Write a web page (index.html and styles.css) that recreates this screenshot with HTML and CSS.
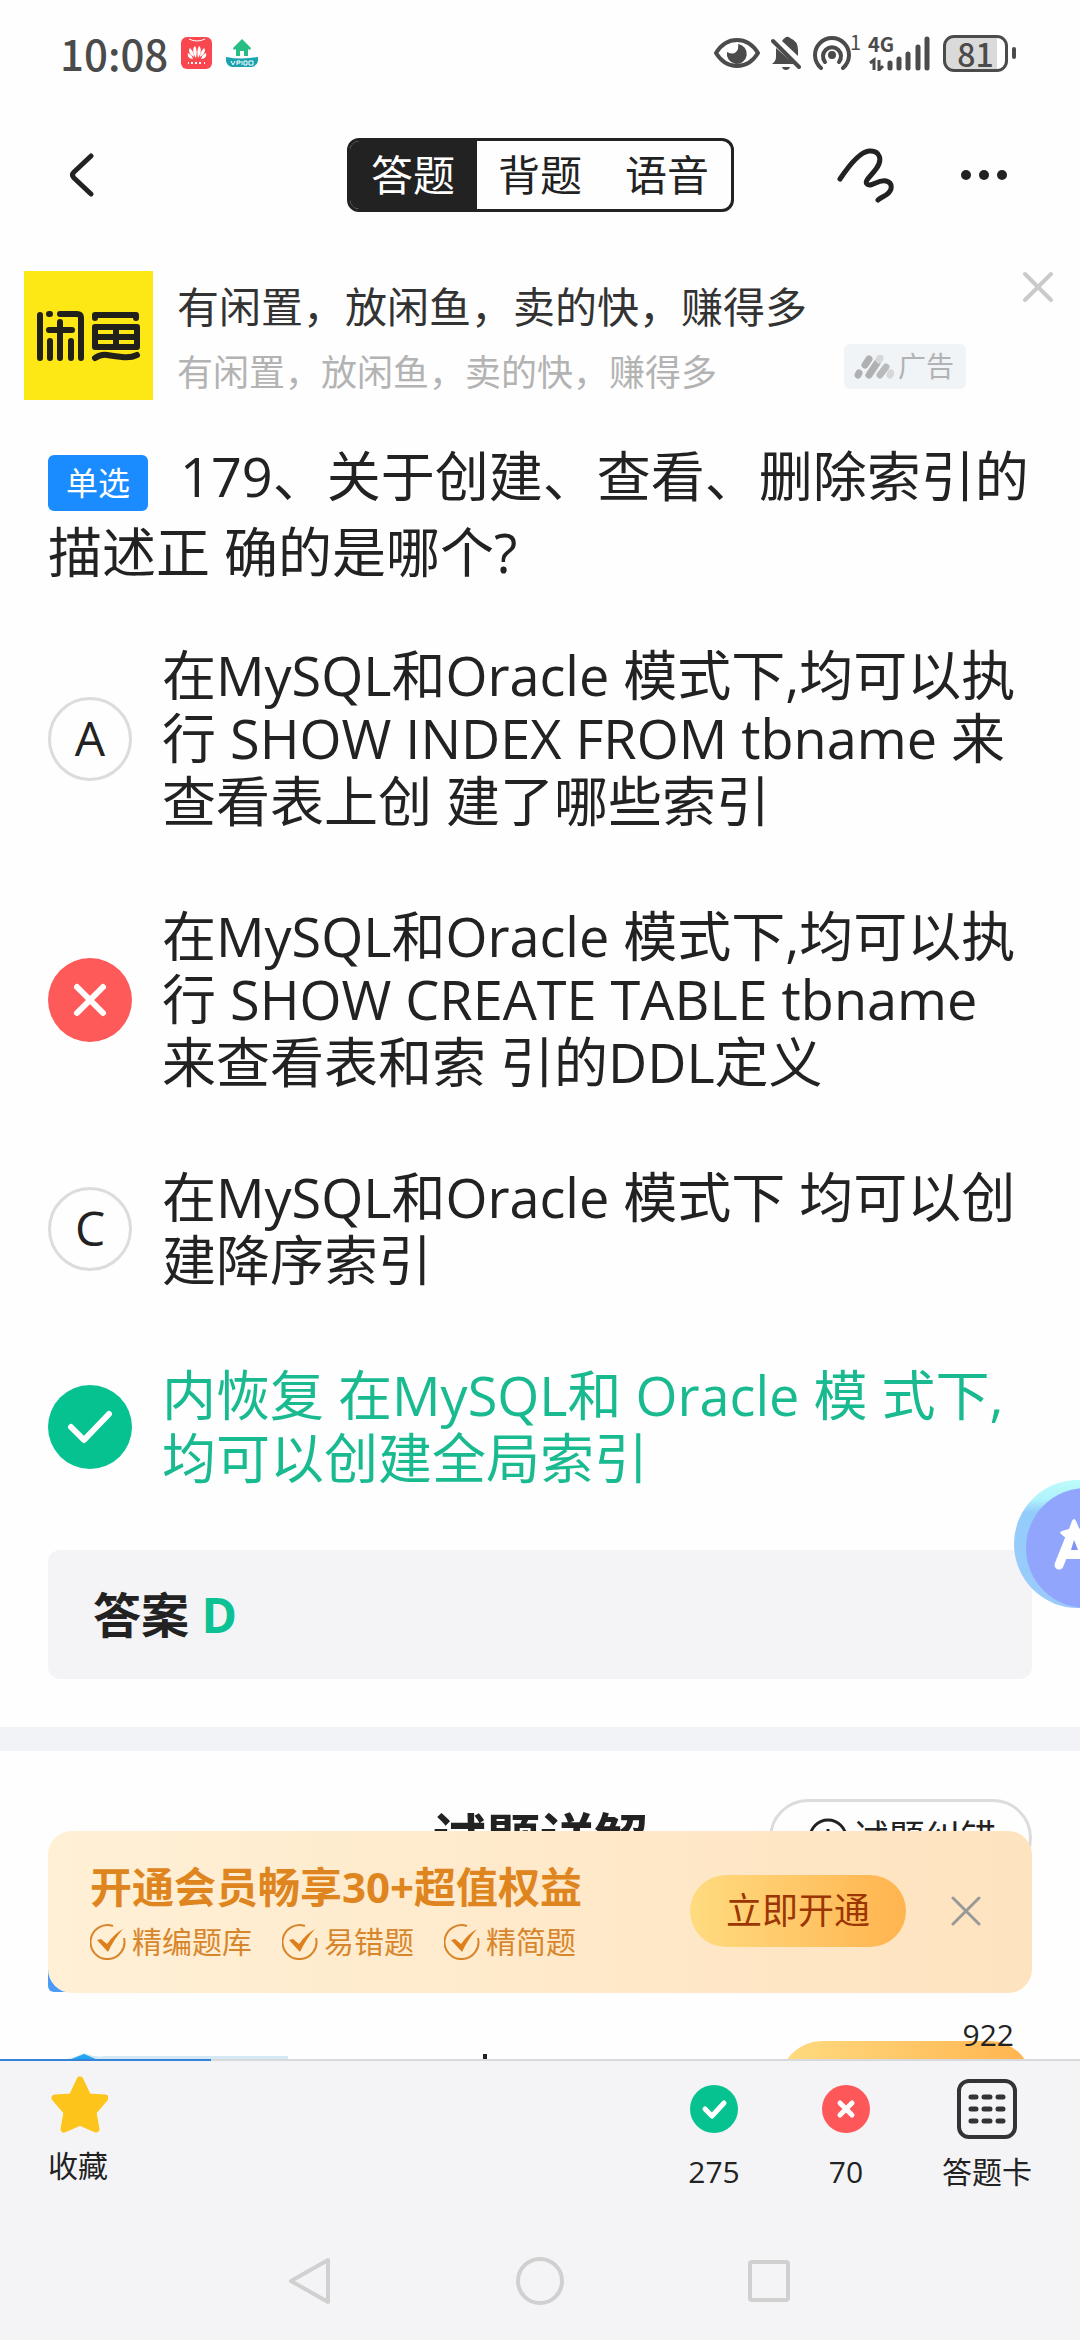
FILE: index.html
```html
<!DOCTYPE html>
<html lang="zh-CN">
<head>
<meta charset="utf-8">
<meta name="viewport" content="width=device-width, initial-scale=1">
<title>答题</title>
<link rel="stylesheet" href="styles.css">
</head>
<body>
<div class="app">
  <div class="status">
    <span class="status-time">10:08</span>
    <svg class="status-app" width="32" height="32" viewBox="0 0 32 32" aria-hidden="true">
      <rect width="31" height="32" rx="6" fill="#f9474f"/>
      <path d="M8 2q8 4 16 0" fill="none" stroke="#fff" stroke-width="1"/>
      <g fill="#fff">
        <path d="M15 21C12 17 11 11 14 9c2 3 2 8 1 12zM17 21c3-4 4-10 1-12-2 3-2 8-1 12zM13 20C8 17 7 13 9 11c3 3 4 6 4 9zM19 20c5-3 6-7 4-9-3 3-4 6-4 9zM12 22c-4 0-6-3-5-6 3 1 4 3 5 6zM20 22c4 0 6-3 5-6-3 1-4 3-5 6z"/>
        <path d="M7 25h1v2H7zM10 25h2v2h-2zM14 25h2v2h-2zM18 25h2v2h-2zM23 25h1v2h-1z"/>
      </g>
    </svg>
    <svg class="status-app" width="32" height="28" viewBox="0 0 32 28" aria-hidden="true">
      <path d="M16 0L7 9l1 2 2-1v7h4v-5h4v5h4v-7l2 1 1-2z" fill="#27bd83"/>
      <path d="M0 18q16 3 32 0v4q-1 5-6 6H6q-5-1-6-6z" fill="#1ba2b0"/>
      <path d="M5 22l2 4 2-4M11 26v-4h3v2h-3M16 22v4M18 22h3v4h-3zM23 22v4h4v-4z" fill="none" stroke="#fff" stroke-width="1"/>
    </svg>
    <div class="status-right">
      <svg width="46" height="32" viewBox="0 0 46 32" aria-hidden="true">
        <path d="M2 16Q10 3 23 3t21 13Q36 29 23 29T2 16z" fill="none" stroke="#4b4b4b" stroke-width="4"/>
        <path d="M24 7a10 10 0 1 1-11 8q6 3 9 0t2-8z" fill="#4b4b4b"/>
      </svg>
      <svg width="30" height="34" viewBox="0 0 30 34" aria-hidden="true">
        <path d="M11 5q1-2 4-4 2-1 4 1 8 3 8 12v6zM5 12v9q0 4-4 7h22zM11 31h8q-1 3-4 3t-4-3z" fill="#4b4b4b"/>
        <path d="M2 5l26 26" stroke="#4b4b4b" stroke-width="4" stroke-linecap="round"/>
      </svg>
      <div class="hotspot">
        <svg width="40" height="34" viewBox="0 0 40 34" aria-hidden="true">
          <g fill="none" stroke="#4b4b4b" stroke-width="4" stroke-linecap="round">
            <path d="M9 32a17 17 0 1 1 22 0"/>
            <path d="M13 26a9 9 0 1 1 14 0"/>
          </g>
          <circle cx="20" cy="19" r="4" fill="#4b4b4b"/>
        </svg>
        <span class="hotspot-count">1</span>
      </div>
      <div class="signal">
        <span class="signal-type">4G</span>
        <svg width="64" height="36" viewBox="0 0 64 36" aria-hidden="true">
          <path d="M2 28l4-3v10M11 25v10l4-4" fill="none" stroke="#4b4b4b" stroke-width="3"/>
          <path d="M22 28v5M31 24v9M40 19v14M50 12v21M59 4v29" fill="none" stroke="#4b4b4b" stroke-width="5" stroke-linecap="round"/>
        </svg>
      </div>
      <div class="battery"><span class="battery-body">81</span><span class="battery-tip"></span></div>
    </div>
  </div>

  <header class="topbar">
    <button class="icon-button" aria-label="返回">
      <svg width="26" height="44" viewBox="0 0 26 44"><path d="M22 3L5 19q-3 3 0 6l17 16" fill="none" stroke="#222" stroke-width="5" stroke-linecap="round" stroke-linejoin="round"/></svg>
    </button>
    <div class="segments">
      <button class="segment segment-active">答题</button>
      <button class="segment">背题</button>
      <button class="segment">语音</button>
    </div>
    <div class="topbar-actions">
      <button class="icon-button" aria-label="画笔">
        <svg width="58" height="56" viewBox="0 0 58 56"><path d="M3 32C13 17 23 5 32 4c11-1 14 9 7 18-5 7-12 12-9 15 4 4 11-5 19-3 7 2 7 9 0 14-3 2-6 3-8 5" fill="none" stroke="#222" stroke-width="5" stroke-linecap="round" stroke-linejoin="round"/></svg>
      </button>
      <button class="icon-button" aria-label="更多">
        <svg width="50" height="12" viewBox="0 0 50 12" fill="#222"><circle cx="5" cy="6" r="5"/><circle cx="23" cy="6" r="5"/><circle cx="41" cy="6" r="5"/></svg>
      </button>
    </div>
  </header>

  <div class="stage">
    <main class="content">
      <section class="ad">
        <svg class="ad-logo" width="129" height="129" viewBox="0 0 129 129" aria-label="闲鱼" role="img">
          <rect width="129" height="129" fill="#fde714"/>
          <g fill="none" stroke="#22201a" stroke-width="6" stroke-linecap="round" stroke-linejoin="round">
            <path d="M16 44v43M25 43h1M36 43h17q4 0 4 4v40M36 51v36M25 59h23M26 70v17M47 70v17"/>
            <path d="M71 47v-3h41v3M71 56h42v20H71zM92 56v20M71 66h42"/>
            <path d="M71 87q6-4 12-3t15 2q9 1 15-2"/>
          </g>
        </svg>
        <div class="ad-body">
          <a class="ad-title" href="#">有闲置，放闲鱼，卖的快，赚得多</a>
          <div class="ad-row">
            <span class="ad-sub">有闲置，放闲鱼，卖的快，赚得多</span>
            <span class="ad-tag">
              <svg width="40" height="24" viewBox="0 0 40 24" fill="none" stroke-width="7" stroke-linecap="round" aria-hidden="true">
                <path d="M11 10l4-6M4 20l1-2" stroke="#aeb0b2"/><path d="M15 20l8-12" stroke="#aeb0b2"/><path d="M26 20l6-8" stroke="#b8babc"/><path d="M25 5l1-2M36 20l1-2" stroke="#d5d7d9"/>
              </svg>广告</span>
          </div>
        </div>
        <button class="icon-button ad-close" aria-label="关闭广告">
          <svg width="32" height="32" viewBox="0 0 32 32"><path d="M3 3l26 26M29 3L3 29" stroke="#cacaca" stroke-width="4" stroke-linecap="round"/></svg>
        </button>
      </section>

      <h1 class="question"><span class="question-type">单选</span>179、关于创建、查看、删除索引的描述正 确的是哪个?</h1>

      <div class="options">
        <button class="option"><span class="mark">A</span><span class="option-text">在MySQL和Oracle 模式下,均可以执行 SHOW INDEX FROM tbname 来查看表上创 建了哪些索引</span></button>
        <button class="option"><svg class="mark-icon" width="84" height="84" viewBox="0 0 84 84" aria-label="错误"><circle cx="42" cy="42" r="42" fill="#ff5a5a"/><path d="M29 29l26 26M55 29L29 55" stroke="#fff" stroke-width="6" stroke-linecap="round"/></svg><span class="option-text">在MySQL和Oracle 模式下,均可以执行 SHOW CREATE TABLE tbname 来查看表和索 引的DDL定义</span></button>
        <button class="option"><span class="mark">C</span><span class="option-text">在MySQL和Oracle 模式下 均可以创建降序索引</span></button>
        <button class="option option-correct"><svg class="mark-icon" width="84" height="84" viewBox="0 0 84 84" aria-label="正确"><circle cx="42" cy="42" r="42" fill="#06c291"/><path d="M23 42l13 13 25-26" fill="none" stroke="#fff" stroke-width="6" stroke-linecap="round" stroke-linejoin="round"/></svg><span class="option-text">内恢复 在MySQL和 Oracle 模 式下,均可以创建全局索引</span></button>
      </div>

      <p class="answer">答案 <span class="answer-value">D</span></p>

      <section class="detail">
        <div class="detail-head">
          <h2 class="detail-title">试题详解</h2>
          <button class="report">
            <svg width="40" height="40" viewBox="0 0 40 40" aria-hidden="true"><circle cx="20" cy="20" r="18" fill="none" stroke="#222" stroke-width="3"/><path d="M20 11v12M20 27v3" stroke="#222" stroke-width="3"/></svg>试题纠错</button>
        </div>
        <div class="detail-tab"></div>
        <div class="detail-row">
          <svg class="detail-avatar" width="228" height="24" viewBox="0 0 228 24" aria-hidden="true"><path d="M0 24V19q12-1 24-7 13 5 20 3h184v9z" fill="#d3e8f3"/><path d="M9 19l15-6 14 6z" fill="#22a5f5"/></svg>
          <span class="detail-mark"></span>
          <span class="detail-cta"></span>
        </div>
      </section>
    </main>

    <button class="ai" aria-label="AI 助手">
      <svg width="66" height="128" viewBox="0 0 66 128">
        <defs><linearGradient id="ring" x1="0" y1="0" x2="0" y2="1"><stop offset="0" stop-color="#bdfbfa"/><stop offset=".15" stop-color="#b0f3fb"/><stop offset=".25" stop-color="#93ccfb"/><stop offset="1" stop-color="#9ccbfb"/></linearGradient></defs>
        <circle cx="64" cy="64" r="64" fill="url(#ring)"/>
        <circle cx="72" cy="68" r="60" fill="#91a5fd"/>
        <path d="M45 85L57 55" stroke="#fff" stroke-width="9" stroke-linecap="round"/>
        <path d="M60 39q1 0 2 2l3 7 1 1v30H50l3-20-6-5q-2-2 1-3l7-2 3-8q1-2 2-2z" fill="#fff"/>
        <path d="M60 60l4 10h-7z" fill="#7f93f3"/>
      </svg>
    </button>

    <aside class="vip">
      <div class="vip-info">
        <strong class="vip-title">开通会员畅享30+超值权益</strong>
        <ul class="vip-list">
          <li class="vip-item"><svg width="36" height="36" viewBox="0 0 36 36" aria-hidden="true"><path d="M23 2a17 17 0 1 0 11 12" fill="none" stroke="#d8852a" stroke-width="2"/><path d="M7 16l4-1 6 5Q24 10 33 5 24 15 18 28z" fill="#dd7f1c"/></svg>精编题库</li>
          <li class="vip-item"><svg width="36" height="36" viewBox="0 0 36 36" aria-hidden="true"><path d="M23 2a17 17 0 1 0 11 12" fill="none" stroke="#d8852a" stroke-width="2"/><path d="M7 16l4-1 6 5Q24 10 33 5 24 15 18 28z" fill="#dd7f1c"/></svg>易错题</li>
          <li class="vip-item"><svg width="36" height="36" viewBox="0 0 36 36" aria-hidden="true"><path d="M23 2a17 17 0 1 0 11 12" fill="none" stroke="#d8852a" stroke-width="2"/><path d="M7 16l4-1 6 5Q24 10 33 5 24 15 18 28z" fill="#dd7f1c"/></svg>精简题</li>
        </ul>
      </div>
      <button class="vip-cta">立即开通</button>
      <button class="icon-button" aria-label="关闭">
        <svg width="30" height="30" viewBox="0 0 30 30"><path d="M2 2l26 26M28 2L2 28" stroke="#999" stroke-width="3" stroke-linecap="round"/></svg>
      </button>
    </aside>
  </div>

  <footer class="bottom">
    <div class="progress"><div class="progress-fill" style="width:19.5%"></div></div>
    <div class="actions">
      <button class="action action-favorite">
        <svg class="action-icon" width="60" height="60" viewBox="-2 0 60 60" aria-hidden="true"><path d="M30 7l8 17 17 1-12 14 3 17-16-7-16 7 3-17L5 25l17-1z" fill="#fdc41b" stroke="#fdc41b" stroke-width="7" stroke-linejoin="round"/></svg>
        收藏
      </button>
      <button class="action action-count">
        <svg class="action-icon" width="60" height="60" viewBox="0 0 60 60" aria-label="答对"><circle cx="30" cy="30" r="24" fill="#06c291"/><path d="M21 30l7 7 12-13" fill="none" stroke="#fff" stroke-width="5" stroke-linecap="round" stroke-linejoin="round"/></svg>
        275
      </button>
      <button class="action action-count">
        <svg class="action-icon" width="60" height="60" viewBox="0 0 60 60" aria-label="答错"><circle cx="30" cy="30" r="24" fill="#fd5759"/><path d="M24 24l12 12M36 24L24 36" stroke="#fff" stroke-width="5" stroke-linecap="round"/></svg>
        70
      </button>
      <button class="action action-card">
        <svg class="action-icon" width="60" height="60" viewBox="0 0 60 60" aria-hidden="true"><rect x="2" y="2" width="56" height="56" rx="10" fill="none" stroke="#333335" stroke-width="4"/><path d="M14 18h5M27 18h6M41 18h5M14 30h5M27 30h6M41 30h5M14 42h5M27 42h6M41 42h5" stroke="#333335" stroke-width="5" stroke-linecap="round"/></svg>
        答题卡
        <span class="card-total">922</span>
      </button>
    </div>
    <nav class="system-nav">
      <button class="icon-button" aria-label="后退"><svg width="48" height="48" viewBox="0 0 48 48"><path d="M41 3v42L4 24z" fill="none" stroke="#d0d0d1" stroke-width="4" stroke-linejoin="round"/></svg></button>
      <button class="icon-button" aria-label="主屏幕"><svg width="48" height="48" viewBox="0 0 48 48"><circle cx="24" cy="24" r="22" fill="none" stroke="#d0d0d1" stroke-width="4"/></svg></button>
      <button class="icon-button" aria-label="最近任务"><svg width="48" height="48" viewBox="0 0 48 48"><rect x="5" y="5" width="38" height="38" rx="2" fill="none" stroke="#d0d0d1" stroke-width="4"/></svg></button>
    </nav>
  </footer>
</div>
</body>
</html>
```
FILE: styles.css
```css
* {
  box-sizing: border-box;
}

body {
  margin: 0;
  background: #fefefe;
  color: #222;
  font-family: "Open Sans", "Noto Sans CJK SC", sans-serif;
}

button {
  margin: 0;
  padding: 0;
  border: 0;
  background: none;
  color: inherit;
  font: inherit;
  cursor: pointer;
}

svg {
  display: block;
  flex: none;
}

a {
  color: inherit;
  text-decoration: none;
}

.app {
  display: flex;
  flex-direction: column;
  height: 100vh;
  overflow: hidden;
}

.icon-button {
  display: flex;
  flex: none;
}

/* Status bar */
.status {
  display: flex;
  align-items: center;
  gap: 13px;
  height: 106px;
  padding: 0 64px 0 60px;
  color: #4b4b4b;
  font-family: "Noto Sans CJK SC", sans-serif;
}

.status-time {
  font-size: 42px;
  font-weight: 500;
  line-height: 60px;
}

.status-right {
  display: flex;
  align-items: center;
  gap: 11px;
  margin-left: auto;
}

.hotspot,
.signal {
  display: flex;
  position: relative;
}

.hotspot {
  width: 45px;
}

.hotspot-count {
  position: absolute;
  top: -4px;
  right: -4px;
  font-size: 20px;
  line-height: 20px;
}

.signal-type {
  position: absolute;
  top: -3px;
  left: 0;
  font-size: 20px;
  font-weight: 700;
  line-height: 24px;
}

.battery {
  display: flex;
  align-items: center;
  gap: 4px;
}

.battery-body {
  width: 65px;
  height: 37px;
  border: 3px solid #4b4b4b;
  border-radius: 11px;
  background: linear-gradient(90deg, #dadada 86%, #fff 86%);
  font-size: 32px;
  font-weight: 500;
  line-height: 30px;
  text-align: center;
}

.battery-tip {
  width: 4px;
  height: 12px;
  border-radius: 2px;
  background: #4b4b4b;
}

/* Top bar */
.topbar {
  display: grid;
  grid-template-columns: 1fr auto 1fr;
  align-items: center;
  padding: 32px 69px;
}

.segments {
  display: flex;
  overflow: hidden;
  border: 3px solid #222;
  border-radius: 12px;
}

.segment {
  width: 127px;
  font-size: 42px;
  line-height: 68px;
}

.segment-active {
  background: #222;
  color: #fff;
}

.topbar-actions {
  display: flex;
  align-items: center;
  justify-content: flex-end;
  gap: 66px;
}

.stage {
  position: relative;
  flex: 1;
  min-height: 0;
  overflow: hidden;
}

/* Ad strip */
.ad {
  display: flex;
  gap: 24px;
  padding: 27px 26px 0 24px;
}

.ad-body {
  flex: 1;
  padding-top: 6px;
}

.ad-title {
  display: block;
  color: #333;
  font-size: 42px;
  line-height: 60px;
}

.ad-row {
  display: flex;
  align-items: flex-start;
  justify-content: space-between;
  margin-top: 7px;
}

.ad-sub {
  color: #b3b3b3;
  font-size: 36px;
  line-height: 58px;
}

.ad-tag {
  display: flex;
  align-items: center;
  gap: 4px;
  padding: 0 12px 0 10px;
  border-radius: 6px;
  background: #f1f4f7;
  color: #b0b2b4;
  font-size: 28px;
  line-height: 45px;
}

.ad-close {
  align-self: flex-start;
  margin-left: 32px;
}

/* Question */
.question {
  margin: 36px 48px 54px;
  font-size: 54px;
  font-weight: 400;
  line-height: 76px;
}

.question-type {
  float: left;
  margin: 17px 32px 0 0;
  padding: 0 18px;
  border-radius: 6px;
  background: #1a8cff;
  color: #fff;
  font-size: 32px;
  line-height: 56px;
}

.options {
  display: flex;
  flex-direction: column;
  gap: 72px;
  padding: 0 48px;
}

.option {
  display: flex;
  align-items: center;
  gap: 30px;
  text-align: left;
}

.option-text {
  flex: 1;
  font-size: 54px;
  line-height: 63px;
}

.option-correct {
  color: #1aba90;
}

.mark {
  flex: none;
  width: 84px;
  height: 84px;
  border: 3px solid #dcdcdc;
  border-radius: 50%;
  font-size: 48px;
  line-height: 76px;
  text-align: center;
}

.answer {
  margin: 60px 48px 48px;
  padding: 0 45px;
  border-radius: 12px;
  background: #f4f4f7;
  font-size: 48px;
  font-weight: 700;
  line-height: 129px;
}

.answer-value {
  color: #0cc193;
}

/* Explanation */
.detail {
  padding: 48px 48px 0;
  border-top: 24px solid #f2f3f7;
}

.detail-head {
  display: grid;
  grid-template-columns: 1fr auto 1fr;
  align-items: center;
}

.detail-title {
  grid-column: 2;
  margin: 0;
  font-size: 54px;
  font-weight: 700;
  line-height: 78px;
}

.report {
  display: flex;
  align-items: center;
  justify-content: center;
  justify-self: end;
  gap: 4px;
  width: 263px;
  padding-left: 4px;
  border: 3px solid #dcdcdc;
  border-radius: 39px;
  font-size: 36px;
  line-height: 72px;
}

.detail-tab {
  width: 96px;
  height: 72px;
  margin-top: 43px;
  border-radius: 6px;
  background: #4a9bf5;
}

.detail-row {
  display: flex;
  margin-top: 49px;
}

.detail-avatar {
  margin-left: 12px;
}

.detail-mark {
  width: 4px;
  height: 12px;
  margin: 13px auto 0 195px;
  background: #222;
}

.detail-cta {
  width: 252px;
  height: 84px;
  border-radius: 42px;
  background: linear-gradient(90deg, #ffdb80, #ffb44f);
}

.ai {
  position: absolute;
  top: 1236px;
  right: 0;
}

/* Membership banner */
.vip {
  display: flex;
  position: absolute;
  right: 48px;
  bottom: 66px;
  left: 48px;
  align-items: center;
  gap: 45px;
  padding: 25px 51px 27px 42px;
  border-radius: 24px;
  background: linear-gradient(90deg, #fff0d6, #fee3bf);
}

.vip-info {
  flex: 1;
}

.vip-title {
  display: block;
  color: #df8520;
  font-size: 42px;
  line-height: 62px;
}

.vip-list {
  display: flex;
  gap: 30px;
  margin: 0;
  padding: 0;
  list-style: none;
}

.vip-item {
  display: flex;
  align-items: center;
  gap: 6px;
  color: #d8862c;
  font-size: 30px;
  line-height: 48px;
}

.vip-cta {
  width: 216px;
  border-radius: 36px;
  background: linear-gradient(90deg, #ffdb80, #ffb44f);
  color: #9c3604;
  font-size: 36px;
  line-height: 72px;
}

/* Bottom bar */
.bottom {
  background: #f4f4f7;
}

.progress {
  height: 2px;
  background: #d9d9db;
}

.progress-fill {
  height: 2px;
  background: #3583d6;
}

.actions {
  display: flex;
  align-items: flex-start;
  padding: 18px 48px 0;
}

.action {
  display: flex;
  position: relative;
  flex-direction: column;
  align-items: center;
  gap: 12px;
  font-size: 30px;
  line-height: 42px;
}

.action-favorite {
  margin: -6px auto 0 0;
}

.action-count {
  width: 132px;
}

.action-card {
  margin-left: 30px;
}

.card-total {
  position: absolute;
  right: 18px;
  bottom: 137px;
}

.system-nav {
  display: flex;
  justify-content: center;
  gap: 181px;
  padding: 64px 0 35px;
}
```
